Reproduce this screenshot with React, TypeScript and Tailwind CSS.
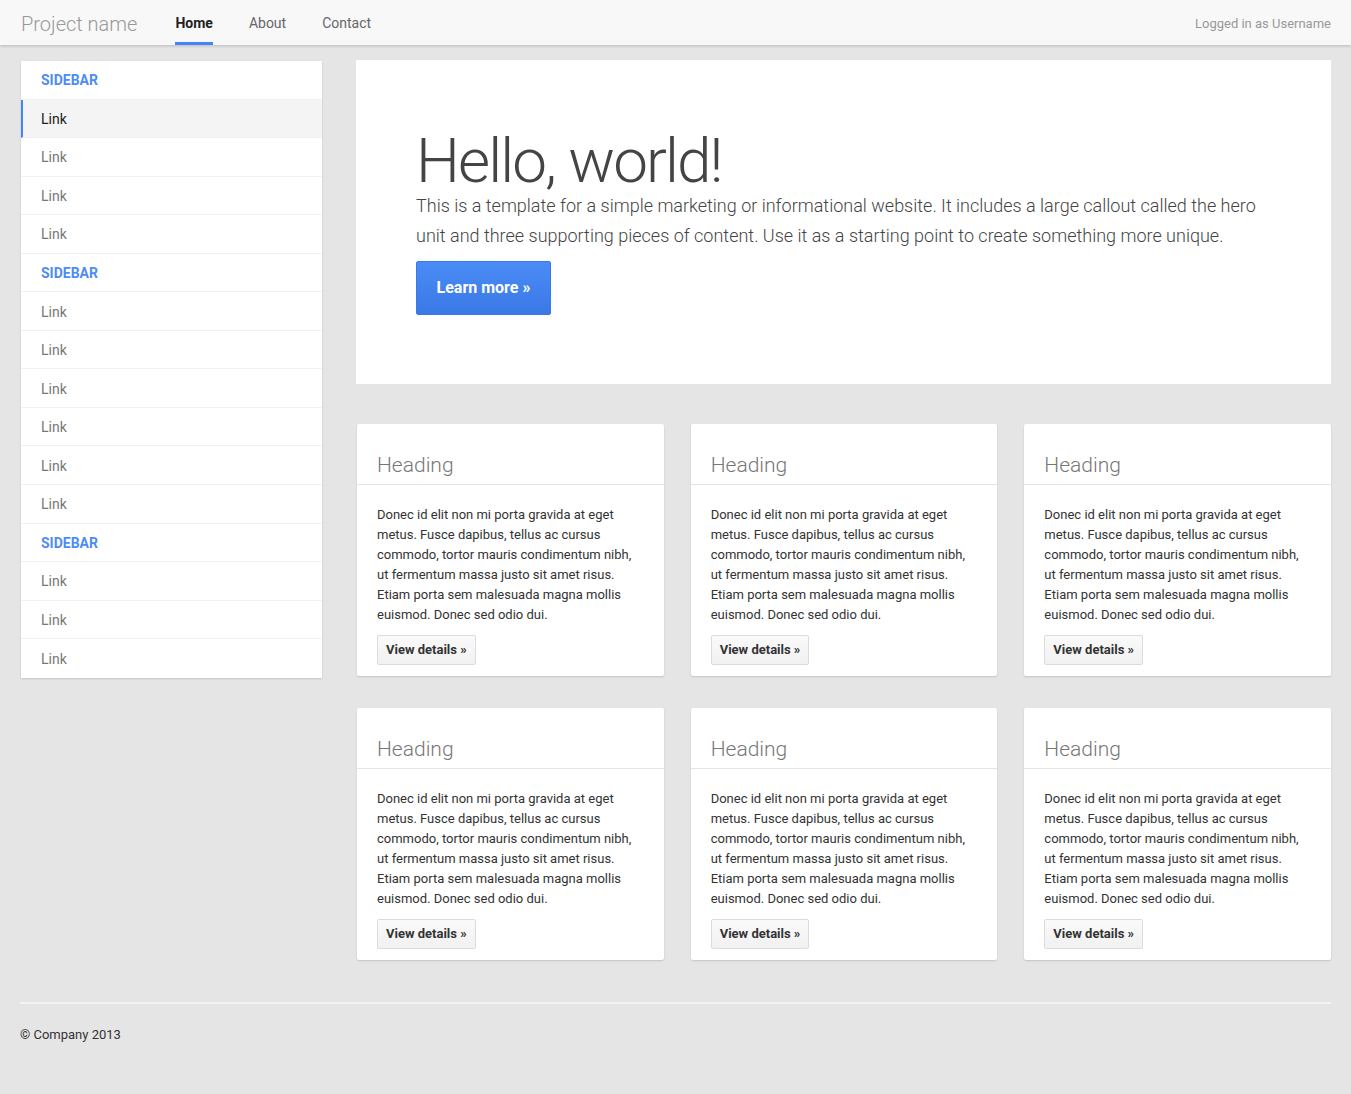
import React from "react";

const sidebar: { label: string; header?: boolean; active?: boolean }[] = [
  { label: "SIDEBAR", header: true },
  { label: "Link", active: true },
  { label: "Link" },
  { label: "Link" },
  { label: "Link" },
  { label: "SIDEBAR", header: true },
  { label: "Link" },
  { label: "Link" },
  { label: "Link" },
  { label: "Link" },
  { label: "Link" },
  { label: "Link" },
  { label: "SIDEBAR", header: true },
  { label: "Link" },
  { label: "Link" },
  { label: "Link" },
];

const cardText =
  "Donec id elit non mi porta gravida at eget metus. Fusce dapibus, tellus ac cursus commodo, tortor mauris condimentum nibh, ut fermentum massa justo sit amet risus. Etiam porta sem malesuada magna mollis euismod. Donec sed odio dui.";

function Card() {
  return (
    <div className="bg-white rounded-[2px] shadow-[0_1px_2px_rgba(0,0,0,0.15)]">
      <div className="h-[61px] px-5 pt-[29px] border-b border-[#e5e5e5]">
        <h2 className="text-[21px] leading-[24px] font-light text-[#777]">Heading</h2>
      </div>
      <div className="px-5 pt-[20px] pb-[11px]">
        <p className="text-[13px] leading-[20px] text-[#333]">{cardText}</p>
        <button className="mt-[10px] h-[30px] px-[8px] text-[13px] font-bold text-[#333] border border-[#dcdcdc] rounded-[2px] bg-gradient-to-b from-[#fafafa] to-[#f1f1f1]">
          View details »
        </button>
      </div>
    </div>
  );
}

export default function App() {
  return (
    <div className="min-h-[1094px] bg-[#e5e5e5] font-['Roboto',sans-serif]">
      {/* Navbar */}
      <div className="h-[45px] bg-[#f8f8f8] shadow-[0_1px_3px_rgba(0,0,0,0.2)] flex items-stretch pl-[21px] pr-5 pt-[2px] relative z-10">
        <div className="flex items-center text-[20px] font-light text-[#999] mr-[38px]">
          Project name
        </div>
        <nav className="flex items-stretch gap-[36px] text-[14px]">
          <a className="relative flex items-center font-bold text-[#222]">
            Home
            <span className="absolute left-0 right-0 bottom-0 h-[3px] bg-[#4285f4]" />
          </a>
          <a className="flex items-center text-[#666]">About</a>
          <a className="flex items-center text-[#666]">Contact</a>
        </nav>
        <div className="ml-auto flex items-center text-[13px] text-[#999]">Logged in as Username</div>
      </div>

      <div className="flex pl-[21px] pr-5 pt-[15px] gap-[34px]">
        {/* Sidebar */}
        <div className="w-[301px] shrink-0 pt-[1px]">
          <ul className="bg-white shadow-[0_1px_2px_rgba(0,0,0,0.15)]">
            {sidebar.map((item, i) => (
              <li
                key={i}
                className={`h-[38.56px] flex items-center pt-[2px] text-[14px] ${
                  i < sidebar.length - 1 ? "border-b border-[#f0f0f0]" : ""
                } ${
                  item.header
                    ? "pl-[20px] font-bold text-[#4d8cf7]"
                    : item.active
                    ? "pl-[18px] bg-[#f4f4f4] text-[#222] border-l-[2px] border-l-[#4285f4]"
                    : "pl-[20px] text-[#777]"
                }`}
              >
                {item.label}
              </li>
            ))}
          </ul>
        </div>

        {/* Main */}
        <div className="flex-1 min-w-0">
          <div className="bg-white pt-[68px] pb-[69px] px-[60px]">
            <h1 className="text-[62px] leading-[66px] font-light text-[#444] tracking-[-1.9px]">Hello, world!</h1>
            <p className="mt-[-3px] text-[18px] leading-[30px] font-light text-[#444]">
              This is a template for a simple marketing or informational website. It includes a large callout called the hero unit and three supporting pieces of content. Use it as a starting point to create something more unique.
            </p>
            <button className="mt-[10px] w-[135px] h-[54px] rounded-[2px] text-white text-[16px] font-bold bg-gradient-to-b from-[#4a8cf6] to-[#3a78e6] border border-[#3b7ae6]">
              Learn more »
            </button>
          </div>

          <div className="grid grid-cols-3 gap-x-[27px] gap-y-[32px] mt-[40px] pl-[1px]">
            {Array.from({ length: 6 }).map((_, i) => (
              <Card key={i} />
            ))}
          </div>
        </div>
      </div>

      {/* Footer */}
      <div className="px-5 mt-[42px]">
        <div className="h-[2px] bg-[#f3f3f3]" />
        <p className="mt-[21px] text-[13px] text-[#333]">© Company 2013</p>
      </div>
    </div>
  );
}
